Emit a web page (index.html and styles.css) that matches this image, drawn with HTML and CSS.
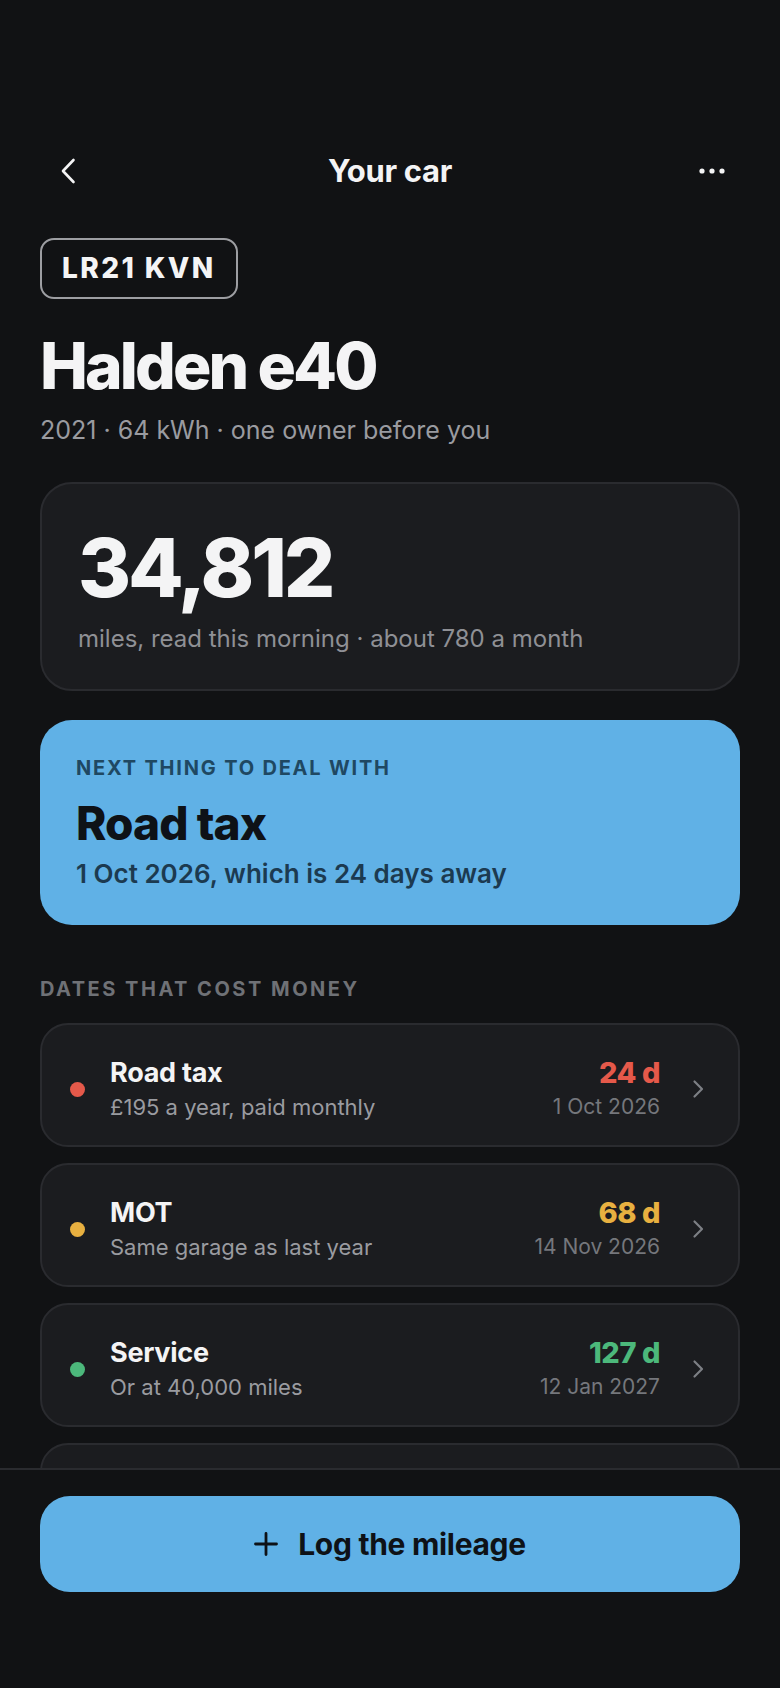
FILE: index.html
```html
<!DOCTYPE html>
<html lang="en">
<head>
<meta charset="utf-8">
<title>Your car</title>
<link rel="stylesheet" href="styles.css">
</head>
<body>
<div class="screen">
  <header class="topbar">
    <button class="icon-btn" aria-label="Back">
      <svg width="18" height="28" viewBox="0 0 18 28" fill="none" stroke="currentColor" stroke-width="2.6" stroke-linecap="round" stroke-linejoin="round"><path d="M14.5 3 L4 14 L14.5 25"/></svg>
    </button>
    <h1 class="topbar-title">Your car</h1>
    <button class="icon-btn" aria-label="More">
      <svg width="30" height="8" viewBox="0 0 30 8" fill="currentColor"><circle cx="5" cy="4" r="2.6"/><circle cx="15" cy="4" r="2.6"/><circle cx="25" cy="4" r="2.6"/></svg>
    </button>
  </header>

  <main class="content">
    <div class="plate">LR21 KVN</div>
    <h2 class="car-name">Halden e40</h2>
    <p class="car-meta">2021 · 64 kWh · one owner before you</p>

    <section class="card mileage">
      <div class="mileage-value">34,812</div>
      <p class="mileage-note">miles, read this morning · about 780 a month</p>
    </section>

    <section class="next">
      <p class="next-label">NEXT THING TO DEAL WITH</p>
      <h3 class="next-title">Road tax</h3>
      <p class="next-date">1 Oct 2026, which is 24 days away</p>
    </section>

    <h4 class="section-label">DATES THAT COST MONEY</h4>
    <ul class="dates">
      <li class="card date-row">
        <span class="dot dot-red"></span>
        <div class="date-main">
          <div class="date-title">Road tax</div>
          <div class="date-sub">£195 a year, paid monthly</div>
        </div>
        <div class="date-side">
          <div class="date-days red">24 d</div>
          <div class="date-when">1 Oct 2026</div>
        </div>
        <svg class="chev" width="20" height="20" viewBox="0 0 20 20" fill="none" stroke="currentColor" stroke-width="2.2" stroke-linecap="round" stroke-linejoin="round"><path d="M6.5 2.5 L14 10 L6.5 17.5"/></svg>
      </li>
      <li class="card date-row">
        <span class="dot dot-yellow"></span>
        <div class="date-main">
          <div class="date-title">MOT</div>
          <div class="date-sub">Same garage as last year</div>
        </div>
        <div class="date-side">
          <div class="date-days yellow">68 d</div>
          <div class="date-when">14 Nov 2026</div>
        </div>
        <svg class="chev" width="20" height="20" viewBox="0 0 20 20" fill="none" stroke="currentColor" stroke-width="2.2" stroke-linecap="round" stroke-linejoin="round"><path d="M6.5 2.5 L14 10 L6.5 17.5"/></svg>
      </li>
      <li class="card date-row">
        <span class="dot dot-green"></span>
        <div class="date-main">
          <div class="date-title">Service</div>
          <div class="date-sub">Or at 40,000 miles</div>
        </div>
        <div class="date-side">
          <div class="date-days green">127 d</div>
          <div class="date-when">12 Jan 2027</div>
        </div>
        <svg class="chev" width="20" height="20" viewBox="0 0 20 20" fill="none" stroke="currentColor" stroke-width="2.2" stroke-linecap="round" stroke-linejoin="round"><path d="M6.5 2.5 L14 10 L6.5 17.5"/></svg>
      </li>
      <li class="card date-row">
        <span class="dot dot-green"></span>
        <div class="date-main">
          <div class="date-title">Insurance</div>
          <div class="date-sub">Renews with the same broker</div>
        </div>
        <div class="date-side">
          <div class="date-days green">203 d</div>
          <div class="date-when">29 Mar 2027</div>
        </div>
        <svg class="chev" width="20" height="20" viewBox="0 0 20 20" fill="none" stroke="currentColor" stroke-width="2.2" stroke-linecap="round" stroke-linejoin="round"><path d="M6.5 2.5 L14 10 L6.5 17.5"/></svg>
      </li>
    </ul>
  </main>

  <footer class="bottom-bar">
    <button class="primary-btn">
      <svg width="24" height="24" viewBox="0 0 24 24" fill="none" stroke="currentColor" stroke-width="2.8" stroke-linecap="round"><path d="M12 1.5 V22.5 M1.5 12 H22.5"/></svg>
      <span>Log the mileage</span>
    </button>
  </footer>
</div>
</body>
</html>
```

FILE: styles.css
```css
* { box-sizing: border-box; }

html, body {
  margin: 0;
  padding: 0;
  background: #111214;
}

body {
  font-family: Inter, "Noto Sans", "Liberation Sans", sans-serif;
  color: #f4f4f5;
}

.screen {
  padding-top: 143px;
  padding-bottom: 260px;
}

.topbar {
  display: grid;
  grid-template-columns: 56px 1fr 56px;
  align-items: center;
  height: 56px;
  padding: 0 40px;
}

.icon-btn {
  width: 56px;
  height: 56px;
  padding: 0;
  border: 0;
  background: none;
  color: #f4f4f5;
  display: flex;
  align-items: center;
  justify-content: center;
}

.topbar-title {
  margin: 0;
  text-align: center;
  font-size: 31px;
  line-height: 36px;
  font-weight: 700;
  letter-spacing: -0.01em;
}

.content {
  padding: 0 40px;
}

.plate {
  display: inline-block;
  margin-top: 39px;
  border: 2px solid #9d9ea2;
  border-radius: 14px;
  padding: 12px 20px 12px 20px;
  font-size: 28px;
  line-height: 33px;
  font-weight: 800;
  letter-spacing: 2.4px;
  color: #f4f4f5;
}

.car-name {
  margin: 32px 0 0;
  font-size: 64px;
  line-height: 70px;
  font-weight: 800;
  letter-spacing: -0.045em;
}

.car-meta {
  margin: 12px 0 0;
  font-size: 25px;
  line-height: 34px;
  color: #9a9ba0;
}

.card {
  background: #1b1c1f;
  border: 2px solid #2a2b2f;
}

.mileage {
  margin-top: 35px;
  border-radius: 32px;
  padding: 40px 36px 34px;
}

.mileage-value {
  font-size: 81px;
  line-height: 88px;
  font-weight: 800;
  letter-spacing: -0.04em;
}

.mileage-note {
  margin: 11px 0 0;
  font-size: 24px;
  line-height: 32px;
  color: #8f9095;
}

.next {
  margin-top: 29px;
  background: #60b1e6;
  border-radius: 32px;
  padding: 36px 36px 34px;
  color: #0e1217;
}

.next-label {
  margin: 0;
  font-size: 20px;
  line-height: 24px;
  font-weight: 700;
  letter-spacing: 0.09em;
  color: #1f4862;
}

.next-title {
  margin: 17px 0 0;
  font-size: 46px;
  line-height: 52px;
  font-weight: 800;
  letter-spacing: -0.02em;
}

.next-date {
  margin: 8px 0 0;
  font-size: 26px;
  line-height: 34px;
  font-weight: 600;
  color: #1c3a50;
}

.section-label {
  margin: 52px 0 22px;
  font-size: 20px;
  line-height: 24px;
  font-weight: 700;
  letter-spacing: 0.125em;
  color: #6f7176;
}

.dates {
  list-style: none;
  margin: 0;
  padding: 0;
  display: flex;
  flex-direction: column;
  gap: 16px;
}

.date-row {
  height: 124px;
  border-radius: 28px;
  display: flex;
  align-items: center;
  padding: 8px 30px 0 28px;
}

.dot {
  width: 15px;
  height: 15px;
  border-radius: 50%;
  flex: none;
  margin-right: 25px;
}
.dot-red { background: #e5594a; }
.dot-yellow { background: #e8b040; }
.dot-green { background: #4cb87b; }

.date-main {
  flex: 1;
  min-width: 0;
}

.date-title {
  font-size: 27px;
  line-height: 32px;
  font-weight: 700;
  letter-spacing: -0.01em;
  color: #f4f4f5;
}

.date-sub {
  margin-top: 3px;
  font-size: 22px;
  line-height: 30px;
  color: #9a9ba0;
}

.date-side {
  text-align: right;
}

.date-days {
  font-size: 29px;
  line-height: 32px;
  font-weight: 800;
  letter-spacing: -0.015em;
}
.date-days.red { color: #e5594a; }
.date-days.yellow { color: #e8b040; }
.date-days.green { color: #4cb87b; }

.date-when {
  margin-top: 3px;
  font-size: 21px;
  line-height: 30px;
  color: #75777c;
}

.chev {
  flex: none;
  margin-left: 28px;
  color: #7d7f84;
}

.bottom-bar {
  position: fixed;
  left: 0;
  right: 0;
  bottom: 0;
  height: 220px;
  background: #111214;
  border-top: 2px solid #2a2b2f;
  padding: 26px 40px 0;
}

.primary-btn {
  width: 100%;
  height: 96px;
  border: 0;
  border-radius: 30px;
  background: #60b1e6;
  color: #0e1217;
  display: flex;
  align-items: center;
  justify-content: center;
  gap: 20px;
  font-family: inherit;
  font-size: 30px;
  font-weight: 700;
  letter-spacing: -0.01em;
}
```
